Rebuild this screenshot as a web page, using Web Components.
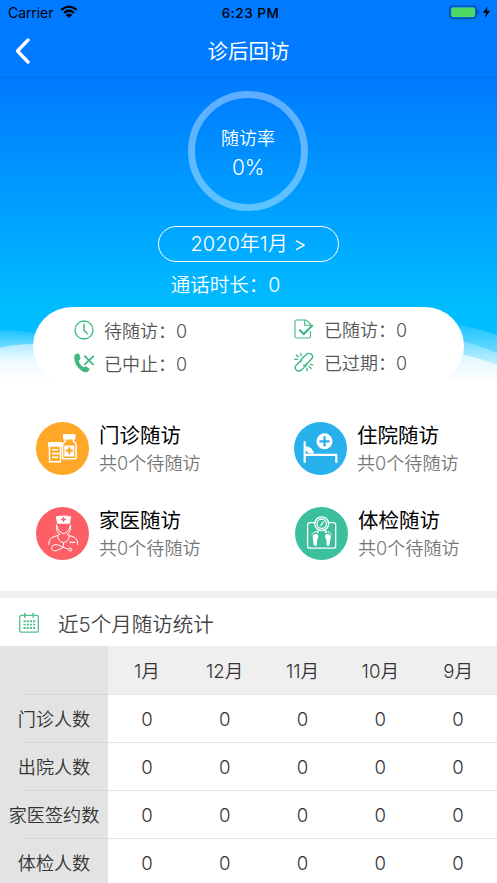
<!DOCTYPE html>
<html lang="zh-CN">
<head>
<meta charset="utf-8">
<title>诊后回访</title>
<style>
html,body{margin:0;height:883px;overflow:hidden;background:#fff}
body{font-family:Inter,"Noto Sans CJK SC",sans-serif;font-weight:350}
</style>
</head>
<body>
<visit-app></visit-app>
<script>
const define = (name, css, html) => customElements.define(name, class extends HTMLElement {
  constructor() {
    super();
    const t = document.createElement('template');
    t.innerHTML = `<style>*{box-sizing:border-box}${css}</style>${typeof html === 'function' ? html(this) : html}`;
    this.attachShadow({mode: 'open'}).append(t.content.cloneNode(true));
  }
});

const icons = {
  wifi: `<svg width="18" height="14" viewBox="0 0 18 14"><g fill="none" stroke="#000" stroke-width="2.2"><path d="M1.300 4.900Q9-1.700 16.700 4.900"/><path d="M4.100 7.900Q9 3.600 13.900 7.900"/></g><path d="M9 13 5.900 9.900Q9 7.200 12.100 9.900Z"/></svg>`,
  battery: `<svg width="43" height="15" viewBox="0 0 43 15"><rect x=".8" y="1" width="26.400" height="12.300" rx="3.200" fill="none" stroke="#00459b" stroke-width="1.2"/><rect x="2.200" y="2.400" width="23.800" height="9.500" rx="1.600" fill="#4cd964"/><path d="M28.600 5v4.600q1.600-.8 1.600-2.300T28.600 5Z" fill="#00459b"/><path d="M38.700 1.300 34 7.800h3.100l-1.200 5.200 5.100-7.200h-3.300Z"/></svg>`,
  back: `<svg width="16" height="26" viewBox="0 0 16 26"><path d="M13 2 2.500 13 13 24" fill="none" stroke="#fff" stroke-width="3.300" stroke-linecap="round" stroke-linejoin="round"/></svg>`,
  clock: `<svg viewBox="0 0 20 20"><g fill="none" stroke="#42b983"><circle cx="10" cy="10" r="9" stroke-width="1.300"/><path d="M10 3.700v6.600l3.600 3.800" stroke-width="1.500"/></g></svg>`,
  phone: `<svg viewBox="0 0 20 20"><path d="M1.200 1.500Q3.500-.1 5.300 1.100L6.500 5.600Q6 7.200 4.700 7.600 5.700 12 9.800 14.300 11.300 13 12.400 13.600L15.300 15.700Q15.800 17.200 13.800 18.800 11.300 20.100 7.600 17.700 1 13.100.2 5.400 0 3 1.200 1.500Z" fill="#42b983"/><path d="m10.800 3.200 8.200 8.200m.3-8-8.500 7.900" stroke="#42b983" stroke-width="1.800" stroke-linecap="round"/></svg>`,
  doc: `<svg viewBox="0 0 20 20"><path d="M16.500 12v5.500q0 1.500-1.500 1.500H2.500Q1 19 1 17.500v-15Q1 1 2.500 1H12l4.500 4v2M10.600 1.300v5h5.600" fill="none" stroke="#42b983" stroke-width="1.100"/><path d="m5.300 10.800 4.500 4.200 8.900-9" fill="none" stroke="#42b983" stroke-width="2.200"/></svg>`,
  link: `<svg viewBox="0 0 20 20"><g fill="none" stroke="#42b983" stroke-width="1.400" stroke-linecap="round"><path d="m7 9.700-.2-1.300q.1-.7.800-1.400l4.700-4.500q2.200-1.900 4.600-.6 2.700 2 1.100 4.700l-5.800 6q-1.300 1.200-2.700.8"/><path d="m12.600 11.500.1.700q0 .7-.7 1.400l-4.500 4.300q-2.300 1.900-4.700.5-2.600-1.900-1-4.700l5.800-6"/><path d="M6.700 1.400 7.200 3.700M2.300 3l2 1.800M.9 7.200l2.500.2M12.800 16.100l.5 2.400m1.800-4 2 2m-.7-4.100 2.300.5"/></g></svg>`,
  calendar: `<svg viewBox="0 0 20 20"><g fill="none" stroke="#58be8d"><rect x=".7" y="2.300" width="18.600" height="16.900" rx="1.500" stroke-width="1.300"/><path d="M5.800 0v4.700M14.200 0v4.700" stroke-width="1.600"/><path d="M4.500 8.200h12M4.500 11.600h12M4.500 15h12" stroke-width="1.900" stroke-dasharray="2.100 1.100"/></g></svg>`,
  medicine: `<svg viewBox="0 0 53 53"><circle cx="26.500" cy="26.500" r="26.500" fill="#ffa726"/><g fill="#fff"><rect x="27" y="12" width="12.500" height="5.500" rx="1"/><rect x="12" y="20" width="14" height="4.700" rx=".6"/></g><g fill="none" stroke="#fff"><path d="M29.200 17v2.500q-2.600 1.200-2.600 3.200V36q0 .7.700.7H39.200q.9 0 .9-.7V22.700q0-2-2.600-3.200V17" stroke-width="1.500"/><path d="M13.500 24v15.700h11V24M16 27.800h6.200M16 31.500h8M16 35.300h6.200" stroke-width="1.500"/></g><rect x="28.300" y="23.500" width="10" height="11" fill="#fff"/><path d="M33.300 25.200v7M29.800 28.700h7" stroke="#ffa726" stroke-width="2.200"/></svg>`,
  bed: `<svg viewBox="0 0 53 53"><circle cx="26.500" cy="26.500" r="26.500" fill="#29b1ed"/><circle cx="30.500" cy="19.300" r="8" fill="#fff"/><path d="M30.500 14.200v10.200M25.400 19.300h10.200" stroke="#29b1ed" stroke-width="2.300"/><path d="M10.700 19.200v21.500M10.700 32.800h31.600v7.900" fill="none" stroke="#fff" stroke-width="2.200"/><path d="M12 24.200q3.700-.1 6.200 3.500l2.200 3.800H14.800L12 28.600Z" fill="#fff"/></svg>`,
  doctor: `<svg viewBox="0 0 53 53"><circle cx="26.500" cy="26.500" r="26.500" fill="#fc5f66"/><path d="M19.800 9.500q7-2 15.300 0l-1.200 7.200H21.200Z" fill="#fff"/><path d="M27.500 10v5M25 12.500h5" stroke="#fc5f66" stroke-width="1.300"/><g fill="none" stroke="#fff" stroke-width="1"><path d="M20.800 18.300q1 6.700 6.700 8.400 5.700-1.700 6.700-8.400M20.500 17.500q-.9 6.700 3.300 10l-8.100 3.100q-3 1.700-3 7.300M34.500 17.500q.9 6.700-3.300 10l7.700 3.100q3 1.700 3 7.300M21.500 28.400q.8 6.500 6 7.100 5.200-.6 6-7.100M27.500 35.500v3q0 2-2.500 3l-4.700 2.200q-3 1-4.500-1.500-1-3.500 3-4.500 3.300-.5 6.700 1.800l7 2.800"/><circle cx="34.300" cy="42.500" r="1.500"/><path d="M33.500 35.300h5.700" stroke-width="1.300"/></g></svg>`,
  scale: `<svg viewBox="0 0 53 53"><circle cx="26.500" cy="26.500" r="26.500" fill="#3bbf9d"/><g fill="none" stroke="#fff" stroke-width="1.300"><path d="M20 15.700h-5q-2.400 0-2.400 2.400v20.800q0 2.300 2.400 2.300h23.300q2.400 0 2.400-2.300V18.100q0-2.400-2.400-2.400H33.500"/><circle cx="26.700" cy="16.700" r="6.900"/><circle cx="26.700" cy="16.700" r="4.700"/><path d="m25.500 18.600 3.300-4.300"/></g><g fill="#fff"><g id="f"><path d="M18 28.300q3.400-3.200 5.100-.2.900 2.100-.8 4.300-1 1.800-.3 4.100.1 2.200-1.600 2.400-1.600.1-1.900-2.500-.2-3.200-.8-5.200-.4-2 .3-2.900Z"/><circle cx="22.600" cy="24.800" r="1.300"/><circle cx="20" cy="25" r=".8"/><circle cx="18.200" cy="26" r=".7"/><circle cx="17" cy="27.500" r=".6"/></g><use href="#f" transform="matrix(-1 0 0 1 53.400 0)"/></g></svg>`
};

define('app-icon', ':host{display:block;flex:none}svg{display:block;width:100%;height:100%}', el => icons[el.getAttribute('name')]);

define('status-bar', `
  :host{display:grid;grid-template-columns:1fr auto 1fr;height:26px;align-items:center;padding:0 5px 0 8px;color:#000;font-size:14px;font-weight:400}
  .l{display:flex;gap:7px;align-items:center}
  .l span{width:45px;letter-spacing:-.08px;margin-top:-1px}
  .c{font-weight:500;font-size:13.500px;letter-spacing:.5px;padding-left:1px}
  .w{width:18px;height:14px;margin-top:-2px}.b{width:43px;height:15px;justify-self:end;margin-top:-1px}`,
  `<div class="l"><span>Carrier</span><app-icon class="w" name="wifi"></app-icon></div><div class="c">6:23 PM</div><app-icon class="b" name="battery"></app-icon>`);

define('nav-bar', `
  :host{display:grid;grid-template-columns:40px 1fr 40px;height:52px;align-items:center;border-bottom:1px solid #0070ea;color:#fff}
  app-icon{width:16px;height:26px;margin:-2px 0 0 15px}
  h1{margin:0;font-size:20.500px;font-weight:400;line-height:30px;text-align:center}`,
  `<app-icon name="back"></app-icon><h1>诊后回访</h1>`);

define('rate-ring', `
  :host{display:flex;flex-direction:column;align-items:center;width:120px;height:120px;border:7.500px solid rgba(255,255,255,.37);border-radius:50%;color:#fff;padding-top:26px}
  .a{font-size:18px;line-height:29px}.b{font-size:21px;line-height:29px;letter-spacing:-.3px}`,
  `<div class="a">随访率</div><div class="b">0%</div>`);

define('stat-item', `
  :host{display:flex;align-items:center;height:32.500px;color:#555;font-size:18px}
  app-icon{width:20px;height:20px;margin-right:10px}`,
  el => `<app-icon name="${el.getAttribute('icon')}"></app-icon><span><slot></slot></span>`);

define('summary-card', `
  :host{display:grid;grid-template-columns:220px 1fr;align-content:start;width:431px;height:78px;border-radius:39px;background:#fff;padding:7px 0 0 41px}
  .r{margin-top:-1px}`,
  `<div><stat-item icon="clock">待随访：0</stat-item><stat-item icon="phone">已中止：0</stat-item></div>
   <div class="r"><stat-item icon="doc">已随访：0</stat-item><stat-item icon="link">已过期：0</stat-item></div>`);

define('hero-panel', `
  :host{display:block;position:relative;height:387px;background:linear-gradient(#007aff 0,#007aff 78px,#00baff 300px,#00bfff 335px)}
  .wave{position:absolute;left:0;bottom:0;width:100%;height:67px}
  .body{position:relative;display:flex;flex-direction:column;align-items:center}
  status-bar,nav-bar{position:relative}
  rate-ring{margin:13px 1px 0 0}
  .pill{width:181px;height:36px;margin-top:15px;border:1.500px solid #fff;border-radius:18px;color:#fff;font-size:20px;line-height:35px;text-align:center;white-space:pre}
  .time{color:#fff;font-size:19.500px;line-height:30px;margin:8px 0 7px;padding-right:46px}`,
  `<svg class="wave" viewBox="0 320 497 67" preserveAspectRatio="none"><defs>
     <linearGradient id="a" x1="0" y1="330" x2="0" y2="350" gradientUnits="userSpaceOnUse"><stop stop-color="#1cc2ff"/><stop offset="1" stop-color="#7ee0ff"/></linearGradient>
     <linearGradient id="b" x1="0" y1="344" x2="0" y2="382" gradientUnits="userSpaceOnUse"><stop stop-color="#b2ebff"/><stop offset=".45" stop-color="#edfaff"/><stop offset="1" stop-color="#fff"/></linearGradient>
     <linearGradient id="c" x1="0" y1="326" x2="0" y2="352" gradientUnits="userSpaceOnUse"><stop stop-color="#22c4ff"/><stop offset="1" stop-color="#6adaff"/></linearGradient>
     <linearGradient id="d" x1="0" y1="341" x2="0" y2="365" gradientUnits="userSpaceOnUse"><stop stop-color="#76deff"/><stop offset="1" stop-color="#c4f0ff"/></linearGradient>
     <linearGradient id="e" x1="0" y1="355" x2="0" y2="382" gradientUnits="userSpaceOnUse"><stop stop-color="#e0f7ff"/><stop offset="1" stop-color="#fff"/></linearGradient></defs>
     <path d="M0 330Q17 330 33 333L248 350V387H0Z" fill="url(#a)"/>
     <path d="M0 348Q15 344 33 344H248V387H0Z" fill="url(#b)"/>
     <path d="M248 340 460 325Q480 329 497 335V387H248Z" fill="url(#c)"/>
     <path d="M248 350 460 340Q480 346 497 353V387H248Z" fill="url(#d)"/>
     <path d="M248 360 460 354Q480 358 497 365V387H248Z" fill="url(#e)"/></svg>
   <status-bar></status-bar><nav-bar></nav-bar>
   <div class="body"><rate-ring></rate-ring><div class="pill">2020年1月 &gt;</div><div class="time">通话时长：0</div><summary-card></summary-card></div>`);

define('visit-entry', `
  :host{display:flex;align-items:center;height:53px;gap:10px}
  app-icon{width:53px;height:53px}
  .t{font-size:20.500px;line-height:28px;color:#000;font-weight:400;padding-top:1px}.s{font-size:18.100px;line-height:26px;color:#777}`,
  el => `<app-icon name="${el.getAttribute('icon')}"></app-icon><div><div class="t"><slot></slot></div><div class="s">共0个待随访</div></div>`);

define('entry-grid', `
  :host{display:grid;grid-template-columns:258px 1fr;row-gap:32px;height:204px;padding:35px 0 0 36px;align-content:start}
  .o{margin-left:1px}`,
  `<visit-entry icon="medicine">门诊随访</visit-entry><visit-entry icon="bed">住院随访</visit-entry>
   <visit-entry icon="doctor">家医随访</visit-entry><visit-entry class="o" icon="scale">体检随访</visit-entry>`);

define('section-title', `
  :host{display:flex;align-items:center;height:55px;border-top:7px solid #efefef;padding:1px 0 0 19px;gap:19px;color:#444;font-size:20.500px}
  app-icon{width:20px;height:20px}`,
  `<app-icon name="calendar"></app-icon><span><slot></slot></span>`);

const row = (label, cells, cls = '') => `<div class="row ${cls}"><div class="h">${label}</div>${cells.map(c => `<div>${c}</div>`).join('')}</div>`;
const zeros = ['0', '0', '0', '0', '0'];
define('stat-table', `
  :host{display:block;color:#333;font-size:18.600px}
  .row{display:grid;grid-template:100%/108px repeat(5,1fr);height:48px;line-height:48px;text-align:center;background:linear-gradient(#e4e4e4,#e4e4e4) 108px 100%/389px 1px no-repeat}
  .h{background:linear-gradient(#d7d7d7,#d7d7d7) 24px 100%/84px 1px no-repeat #e3e3e3;font-size:18.100px;white-space:nowrap}
  .head{background-color:#efefef;height:49px;line-height:50px}`,
  row('', ['1月', '12月', '11月', '10月', '9月'], 'head') + ['门诊人数', '出院人数', '家医签约数', '体检人数'].map(l => row(l, zeros)).join(''));

define('visit-app', ':host{display:block;width:497px}',
  `<hero-panel></hero-panel><entry-grid></entry-grid><section-title>近5个月随访统计</section-title><stat-table></stat-table>`);
</script>
</body>
</html>
